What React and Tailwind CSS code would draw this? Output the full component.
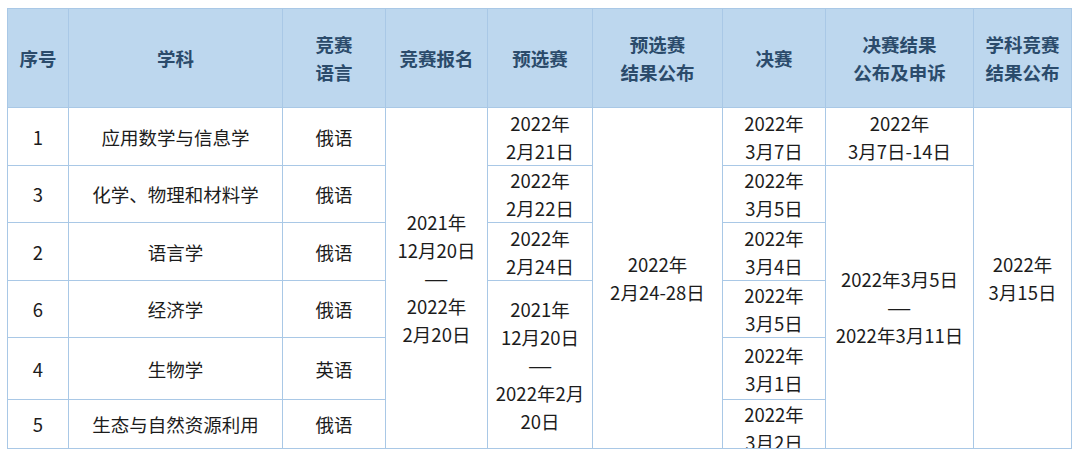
const font = { fontFamily: '"Noto Sans CJK SC", "Noto Sans", sans-serif' };

const subjects = [
  { no: "1", name: "应用数学与信息学", lang: "俄语", h: "h-[58px]" },
  { no: "3", name: "化学、物理和材料学", lang: "俄语", h: "h-[57px]" },
  { no: "2", name: "语言学", lang: "俄语", h: "h-[58px]" },
  { no: "6", name: "经济学", lang: "俄语", h: "h-[57px]" },
  { no: "4", name: "生物学", lang: "英语", h: "h-[62px]" },
  { no: "5", name: "生态与自然资源利用", lang: "俄语", h: "h-[49px]" },
];

const finals = ["3月7日", "3月5日", "3月4日", "3月5日", "3月1日", "3月2日"];
const prelim = ["2月21日", "2月22日", "2月24日"];

const td = "border border-[#a9c8e6] p-0 text-center align-middle";
const th = "border border-[#a9c8e6] p-0 text-center align-middle font-bold text-[#2b4b6b]";

const Two = ({ top, bottom }) => (
  <>
    {top}
    <br />
    {bottom}
  </>
);

// wide dash line between two dates
const Dash = () => (
  <>
    <br />
    <span className="inline-block scale-x-150">—</span>
    <br />
  </>
);

export default function App() {
  return (
    <div className="w-[1080px] h-[458px] bg-white pt-2 pl-[7px] overflow-hidden" style={font}>
      <table className="table-fixed border-collapse text-[18.5px] leading-[28px] text-[#1c1c1c] whitespace-nowrap">
        <colgroup>
          <col className="w-[61px]" />
          <col className="w-[214px]" />
          <col className="w-[103px]" />
          <col className="w-[102px]" />
          <col className="w-[105px]" />
          <col className="w-[130px]" />
          <col className="w-[103px]" />
          <col className="w-[148px]" />
          <col className="w-[98px]" />
        </colgroup>
        <thead>
          <tr className="bg-[#bdd7ee]">
            <th className={`${th} h-[99px]`}>序号</th>
            <th className={th}>学科</th>
            <th className={th}><Two top="竞赛" bottom="语言" /></th>
            <th className={th}>竞赛报名</th>
            <th className={th}>预选赛</th>
            <th className={th}><Two top="预选赛" bottom="结果公布" /></th>
            <th className={th}>决赛</th>
            <th className={th}><Two top="决赛结果" bottom="公布及申诉" /></th>
            <th className={th}><Two top="学科竞赛" bottom="结果公布" /></th>
          </tr>
        </thead>
        <tbody>
          {subjects.map((s, i) => (
            <tr key={s.no}>
              <td className={`${td} ${s.h}`}>{s.no}</td>
              <td className={td}>{s.name}</td>
              <td className={td}>{s.lang}</td>
              {i === 0 && (
                <td className={td} rowSpan={6}>
                  2021年
                  <br />
                  12月20日
                  <Dash />
                  2022年
                  <br />
                  2月20日
                </td>
              )}
              {i < 3 && (
                <td className={td}>
                  <Two top="2022年" bottom={prelim[i]} />
                </td>
              )}
              {i === 3 && (
                <td className={td} rowSpan={3}>
                  2021年
                  <br />
                  12月20日
                  <Dash />
                  2022年2月
                  <br />
                  20日
                </td>
              )}
              {i === 0 && (
                <td className={td} rowSpan={6}>
                  <Two top="2022年" bottom="2月24-28日" />
                </td>
              )}
              <td className={`${td} ${i === 5 ? "align-top" : ""}`}>
                {i === 5 ? (
                  <div className="h-[48px] overflow-hidden">
                    <Two top="2022年" bottom={finals[i]} />
                  </div>
                ) : (
                  <Two top="2022年" bottom={finals[i]} />
                )}
              </td>
              {i === 0 && (
                <td className={td}>
                  <Two top="2022年" bottom="3月7日-14日" />
                </td>
              )}
              {i === 1 && (
                <td className={td} rowSpan={5}>
                  2022年3月5日
                  <Dash />
                  2022年3月11日
                </td>
              )}
              {i === 0 && (
                <td className={td} rowSpan={6}>
                  <Two top="2022年" bottom="3月15日" />
                </td>
              )}
            </tr>
          ))}
        </tbody>
      </table>
    </div>
  );
}
